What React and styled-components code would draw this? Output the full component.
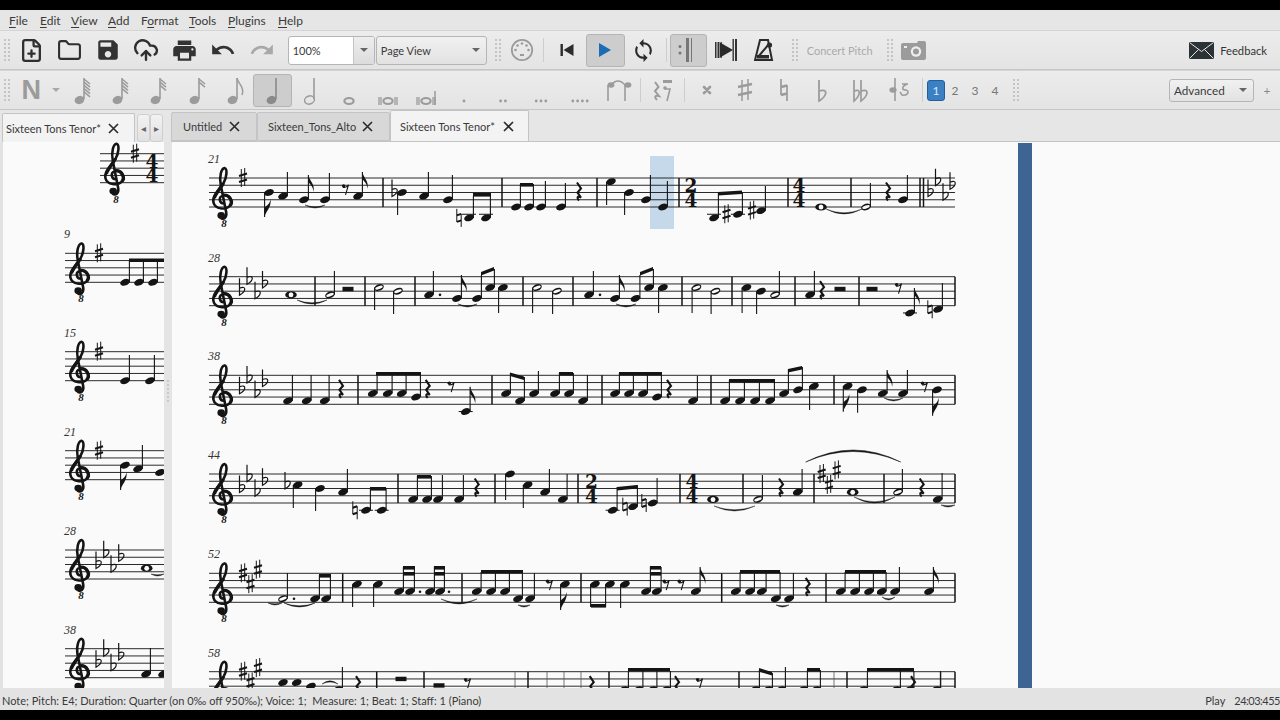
import React from "react";
import styled, { createGlobalStyle } from "styled-components";
import { CloudUpload, FilePlus, Folder } from "lucide-react";

const UI_FONT = `Lato, "Noto Sans", sans-serif`;
const INK = "#141414";
const GREY_ICON = "#9b9b9b";

const GlobalStyle = createGlobalStyle`
  html, body { margin: 0; padding: 0; background: #000; }
  body { font-family: ${UI_FONT}; overflow: hidden; }
`;

const Window = styled.div`
  width: 1280px;
  height: 720px;
  display: flex;
  flex-direction: column;
  background: #e4e4e4;
  border-top: 10px solid #000;
  border-bottom: 10px solid #000;
  box-sizing: border-box;
`;

const MenuBar = styled.div`
  height: 20px;
  flex: none;
  display: flex;
  align-items: center;
  padding-left: 9px;
  background: #e6e6e6;
`;

const MenuItem = styled.span`
  width: ${props => props.$w}px;
  font-size: 12px;
  color: #3a3a3a;
  u { text-underline-offset: 2px; }
`;

const Toolbar = styled.div`
  height: 40px;
  flex: none;
  box-sizing: border-box;
  display: flex;
  align-items: center;
  padding-left: 3px;
  background: linear-gradient(#ececec, #e4e4e4);
  border-top: 1px solid #d4d4d4;
  border-bottom: 1px solid #c6c6c6;
`;

const Grip = styled.div`
  width: 2px;
  height: 22px;
  flex: none;
  margin: 0 ${props => props.$mr ?? 4}px 0 ${props => props.$ml ?? 4}px;
  border-left: 2px dotted #c4c4c4;
  border-right: 2px dotted #c4c4c4;
`;

const Sep = styled.div`
  width: 1px;
  height: 24px;
  flex: none;
  margin: 0 ${props => props.$m ?? 3}px;
  background: #cdcdcd;
`;

const ToolButton = styled.div`
  width: ${props => props.$w || 38.4}px;
  height: 33px;
  flex: none;
  box-sizing: border-box;
  display: flex;
  align-items: center;
  justify-content: center;
  margin-left: ${props => props.$ml || 0}px;
  padding-right: ${props => props.$pr || 0}px;
  border-radius: 3px;
  border: 1px solid ${props => (props.$on ? "#b4b4b4" : "transparent")};
  background: ${props => (props.$on ? "#cdcdcd" : "transparent")};
`;

const Combo = styled.div`
  width: ${props => props.$w}px;
  height: ${props => props.$h || 29}px;
  flex: none;
  box-sizing: border-box;
  display: flex;
  align-items: center;
  justify-content: space-between;
  padding-left: 4px;
  margin-left: ${props => props.$ml || 0}px;
  font-size: ${props => props.$fs || 11}px;
  color: #3a3a3a;
  border: 1px solid #b5b5b5;
  border-radius: 3px;
  background: linear-gradient(#f1f1f1, #e2e2e2);
  overflow: hidden;
`;

const ZoomCombo = styled(Combo)`
  background: #fff;
  padding-right: 0;
`;

const ComboArrow = styled.div`
  width: ${props => props.$w || 20}px;
  align-self: stretch;
  display: flex;
  align-items: center;
  justify-content: center;
  background: ${props => (props.$panel ? "linear-gradient(#eee, #dcdcdc)" : "transparent")};
  border-left: ${props => (props.$panel ? "1px solid #c4c4c4" : "none")};

  &::after {
    content: "";
    border-left: 4px solid transparent;
    border-right: 4px solid transparent;
    border-top: 4px solid #666;
  }
`;

const Disabled = styled.span`
  font-size: 11px;
  color: #aaa;
  width: ${props => props.$w}px;
  margin-left: ${props => props.$ml || 0}px;
  flex: none;
`;

const Spacer = styled.div`
  flex: 1;
`;

const Feedback = styled.div`
  display: flex;
  align-items: center;
  gap: 6px;
  padding-right: 13px;
  font-size: 11.2px;
  color: #333;
`;

const SmallArrow = styled.div`
  width: 11px;
  flex: none;
  display: flex;
  justify-content: center;

  &::after {
    content: "";
    border-left: 4px solid transparent;
    border-right: 4px solid transparent;
    border-top: 4px solid #a8a8a8;
  }
`;

const BigN = styled.span`
  font-family: "Liberation Sans", sans-serif;
  font-weight: 700;
  font-size: 27px;
  color: ${GREY_ICON};
`;

const VoiceButton = styled.div`
  width: ${props => (props.$on ? 18 : 20)}px;
  height: ${props => (props.$on ? 21 : 22)}px;
  flex: none;
  box-sizing: border-box;
  display: flex;
  align-items: center;
  justify-content: center;
  font-size: 12px;
  border-radius: 3px;
  color: ${props => (props.$on ? "#d7e8f7" : "#777")};
  background: ${props => (props.$on ? "#3a80c2" : "transparent")};
  border: ${props => (props.$on ? "1px solid #205f9c" : "none")};
`;

const PlusLabel = styled.span`
  width: 26px;
  text-align: center;
  font-size: 12px;
  color: #888;
  flex: none;
`;

const TabRow = styled.div`
  height: 32px;
  flex: none;
  box-sizing: border-box;
  display: flex;
  align-items: flex-end;
  background: #e6e6e6;
  padding-left: 2px;
`;

const Tab = styled.div`
  width: ${props => props.$w}px;
  height: ${props => props.$h || 29}px;
  flex: none;
  box-sizing: border-box;
  display: flex;
  align-items: center;
  padding-left: ${props => props.$pl}px;
  font-size: 11px;
  color: #3a3a3a;
  background: ${props => (props.$active ? "#f3f3f3" : "#d8d8d8")};
  border: 1px solid #c4c4c4;
  border-bottom: ${props => (props.$active ? "none" : "1px solid #c4c4c4")};
  border-radius: 2px 2px 0 0;
`;

const TabLabel = styled.span`
  width: ${props => props.$w}px;
  flex: none;
  white-space: nowrap;
`;

const TabClose = styled.svg`
  width: 11px;
  height: 11px;
  flex: none;
`;

const TabScroll = styled.div`
  width: 13px;
  height: 28px;
  flex: none;
  box-sizing: border-box;
  display: flex;
  align-items: center;
  justify-content: center;
  color: #666;
  font-size: 10px;
  background: linear-gradient(#f2f2f2, #e2e2e2);
  border: 1px solid #cfcfcf;
  border-radius: 3px;
  margin-left: ${props => props.$ml || 0}px;
`;

const TabStrip = styled.div`
  flex: 1;
  height: 29px;
  display: flex;
  align-items: flex-end;
  margin-left: 8px;
  border-bottom: 1px solid #c4c4c4;
  box-sizing: border-box;
`;

const Body = styled.div`
  flex: 1;
  min-height: 0;
  display: flex;
  background: #fafafa;
`;

const SidePanel = styled.div`
  width: 164px;
  flex: none;
  box-sizing: border-box;
  border-left: 3px solid #e2e2e2;
  overflow: hidden;
`;

const Splitter = styled.div`
  width: 8px;
  flex: none;
  background: #e4e4e4;
  display: flex;
  align-items: center;
  justify-content: center;
`;

const SplitHandle = styled.div`
  width: 0;
  height: 22px;
  margin-bottom: 48px;
  border-left: 2px dotted #c8c8c8;
`;

const ScorePane = styled.div`
  flex: 1;
  display: flex;
  overflow: hidden;
`;

const ScoreSvg = styled.svg`
  display: block;
  flex: none;
`;

const BlueBar = styled.div`
  width: 14px;
  flex: none;
  margin-top: 1px;
  background: #3d6493;
`;

const StatusBar = styled.div`
  height: 22px;
  flex: none;
  box-sizing: border-box;
  display: flex;
  align-items: center;
  justify-content: space-between;
  padding: 3px 0 0 2px;
  font-size: 11px;
  color: #3a3a3a;
  background: #e3e3e3;
  white-space: pre;
`;

const StatusRight = styled.div`
  display: flex;
  gap: 9px;
`;

const Clock = styled.span`
  letter-spacing: -0.5px;
`;

const MeasureNumber = styled.text`
  font-family: "Liberation Serif", serif;
  font-style: italic;
  font-size: 12px;
  fill: #333;
`;

const ClefEight = styled.text`
  font-family: "Liberation Serif", serif;
  font-style: italic;
  font-weight: 700;
  font-size: 11px;
  fill: ${INK};
  text-anchor: middle;
`;

const TimeDigit = styled.text`
  font-family: "DejaVu Serif", serif;
  font-weight: 700;
  font-size: 18.5px;
  fill: ${INK};
  text-anchor: middle;
`;

// ---- score drawing ----

const SP = 3.625;
const yAt = (bottom, p) => bottom - p * SP;

const Clef = ({ x, bottom, eight }) => (
  <g transform={`translate(${x} ${bottom})`}>
    <g transform="scale(1.12 1)">
      <path
        d="M1.5 -3.5 C-3.5 -3 -4.5 -10 0 -11.5 C6 -13 9.5 -5 6 -1 C2.5 3 -7 2.5 -8.5 -4.5 C-10 -11 -3 -18 0.5 -24 C3.5 -30 4 -38 1.5 -39 C-1.5 -38.5 -3.5 -31 -2 -22 L2.8 5 C3.8 11 0 13.5 -2 11"
        fill="none"
        stroke={INK}
        strokeWidth="2.3"
      />
      <path d="M0 -12 C6 -13 9.5 -5 6 -1" fill="none" stroke={INK} strokeWidth="3" />
      <path d="M-7.8 -9 C-6 -14 -2 -19 0.5 -24" fill="none" stroke={INK} strokeWidth="3" />
      <circle cx="-1.6" cy="8.4" r="3.4" fill={INK} />
    </g>
    {eight && <ClefEight x="1" y="20">8</ClefEight>}
  </g>
);

const Flat = ({ x, y }) => (
  <path
    d={`M${x - 2} ${y - 13} L${x - 2} ${y + 4} C${x + 5} ${y + 0} ${x + 5} ${y - 6} ${x - 2} ${y - 3}`}
    fill="none"
    stroke={INK}
    strokeWidth="1.2"
  />
);

const Sharp = ({ x, y }) => (
  <g stroke={INK}>
    <path d={`M${x - 1.7} ${y - 9} V${y + 9} M${x + 1.7} ${y - 10} V${y + 8}`} strokeWidth="1" />
    <path d={`M${x - 4} ${y - 2} L${x + 4} ${y - 4.5} M${x - 4} ${y + 4} L${x + 4} ${y + 1.5}`} strokeWidth="2" />
  </g>
);

const Natural = ({ x, y }) => (
  <g stroke={INK}>
    <path d={`M${x - 2.2} ${y - 9} V${y + 4} M${x + 2.2} ${y - 4} V${y + 9}`} strokeWidth="1" />
    <path d={`M${x - 2.2} ${y - 2.5} L${x + 2.2} ${y - 4} M${x - 2.2} ${y + 4} L${x + 2.2} ${y + 2.5}`} strokeWidth="2" />
  </g>
);

const Head = ({ x, y, open, whole }) => {
  if (whole) {
    return (
      <g>
        <ellipse cx={x} cy={y} rx="5.8" ry="3.6" fill={INK} />
        <ellipse cx={x} cy={y} rx="2.4" ry="2.5" fill="#fafafa" />
      </g>
    );
  }
  return (
    <g transform={`rotate(-20 ${x} ${y})`}>
      <ellipse cx={x} cy={y} rx="5" ry="3.2" fill={INK} />
      {open && <ellipse cx={x} cy={y} rx="3.9" ry="1.5" fill="#fafafa" />}
    </g>
  );
};

// one note: [x, pitch, stem end y, options]
const Note = ({ bottom, n }) => {
  const [x, p, end, o = {}] = n;
  const y = yAt(bottom, p);
  const up = end < y;
  const sx = up ? x + 4.4 : x - 4.4;
  return (
    <g>
      {p <= -2 && <line x1={x - 7} x2={x + 7} y1={yAt(bottom, -2)} y2={yAt(bottom, -2)} stroke={INK} />}
      {end != null && <line x1={sx} x2={sx} y1={y} y2={end} stroke={INK} strokeWidth="1.1" />}
      {o.flag && up && (
        <path
          d={`M${sx} ${end} C${sx + 1} ${end + 6} ${sx + 7} ${end + 9} ${sx + 5} ${end + 17} C${sx + 5} ${end + 11} ${sx + 1} ${end + 9} ${sx} ${end + 7} Z`}
          fill={INK}
        />
      )}
      {o.flag && !up && (
        <path
          d={`M${sx} ${end} C${sx + 1} ${end - 6} ${sx + 7} ${end - 9} ${sx + 6} ${end - 18} C${sx + 5} ${end - 12} ${sx + 1} ${end - 11} ${sx} ${end - 9} Z`}
          fill={INK}
        />
      )}
      <Head x={x} y={y} open={o.open} whole={o.whole} />
      {o.dot && <circle cx={x + 11} cy={y} r="1.3" fill={INK} />}
    </g>
  );
};

const Beam = ({ b }) => {
  const [x1, y1, x2, y2] = b;
  return <polygon points={`${x1},${y1} ${x2},${y2} ${x2},${y2 + 3.6} ${x1},${y1 + 3.6}`} fill={INK} />;
};

const Tie = ({ t }) => {
  const [x1, x2, y, d = 5] = t;
  const mid = (x1 + x2) / 2;
  return (
    <path
      d={`M${x1} ${y} Q${mid} ${y + d * 2} ${x2} ${y} Q${mid} ${y + d * 2 - 2.4} ${x1} ${y} Z`}
      fill={INK}
      stroke={INK}
      strokeWidth="0.4"
    />
  );
};

const QuarterRest = ({ x, y }) => (
  <path
    d={`M${x - 2} ${y - 10} L${x + 2} ${y - 4} L${x - 1.5} ${y} L${x + 2} ${y + 5} C${x - 1.5} ${y + 3} ${x - 2.5} ${y + 5} ${x} ${y + 8}`}
    fill="none"
    stroke={INK}
    strokeWidth="2.1"
  />
);

const EighthRest = ({ x, y }) => (
  <g>
    <circle cx={x - 2.4} cy={y - 3} r="1.7" fill={INK} />
    <path d={`M${x - 3} ${y - 1.5} C${x - 1} ${y - 1} ${x + 1} ${y - 1.5} ${x + 2.5} ${y - 4} L${x - 0.5} ${y + 6}`} fill="none" stroke={INK} strokeWidth="1.1" />
  </g>
);

const System = ({ s }) => {
  const { bottom, x1, x2 = 955, clefAt = 14, noEight } = s;
  return (
    <g>
      {[0, 1, 2, 3, 4].map(i => (
        <line key={i} x1={x1} x2={x2} y1={yAt(bottom, i * 2)} y2={yAt(bottom, i * 2)} stroke="#2a2a2a" strokeWidth="1" />
      ))}
      {s.label && (
        <MeasureNumber x={x1 - 1} y={bottom - 44}>
          {s.label}
        </MeasureNumber>
      )}
      <Clef x={x1 + clefAt} bottom={bottom} eight={!noEight} />
      {(s.flats || []).map(([x, p]) => <Flat key={x} x={x} y={yAt(bottom, p)} />)}
      {(s.sharps || []).map(([x, p]) => <Sharp key={x} x={x} y={yAt(bottom, p)} />)}
      {(s.naturals || []).map(([x, p]) => <Natural key={x} x={x} y={yAt(bottom, p)} />)}
      {(s.time || []).map(([x, a, b]) => (
        <g key={x}>
          <TimeDigit x={x} y={yAt(bottom, 4) - 0.5}>{a}</TimeDigit>
          <TimeDigit x={x} y={bottom - 0.5}>{b}</TimeDigit>
        </g>
      ))}
      {(s.bars || []).map(x => (
        <line key={x} x1={x} x2={x} y1={yAt(bottom, 8)} y2={bottom} stroke={INK} strokeWidth="1.5" />
      ))}
      {(s.thin || []).map(x => (
        <line key={x} x1={x} x2={x} y1={yAt(bottom, 8)} y2={bottom} stroke="#555" strokeWidth="0.8" />
      ))}
      {(s.notes || []).map(n => <Note key={n[0]} bottom={bottom} n={n} />)}
      {(s.beams || []).map((b, i) => <Beam key={i} b={b} />)}
      {(s.ties || []).map((t, i) => <Tie key={i} t={t} />)}
      {(s.quarter || []).map(x => <QuarterRest key={x} x={x} y={yAt(bottom, 4)} />)}
      {(s.eighth || []).map(x => <EighthRest key={x} x={x} y={yAt(bottom, 5)} />)}
      {(s.half || []).map(([x, p = 4]) => (
        <rect key={x} x={x - 5.5} y={yAt(bottom, p) - 4.4} width="11" height="4.4" fill={INK} />
      ))}
      {s.extra || null}
    </g>
  );
};

const FLATS = [[241.5, 4], [249, 7], [257, 3], [264.5, 6]];
const SHARPS = [[243, 8], [250.5, 5], [258, 9]];
const SIDE_FLATS = [[98, 4], [105.7, 7], [113, 3], [120.7, 6]];
const f = { flag: true };
const o = { open: true };
const w = { whole: true };

const SYSTEMS = [
  {
    bottom: 207, x1: 209, label: "21",
    sharps: [[243, 8], [726.5, -2], [752, -1]],
    naturals: [[459, -3]],
    flats: [[394, 4], [930, 4], [937.5, 7], [945, 3], [952, 6]],
    time: [[691, 2, 4], [799, 4, 4]],
    bars: [383, 502, 597, 679, 788, 851, 920, 923.5],
    notes: [
      [269, 4, 217, f], [283, 3, 172], [304, 2, 175, f], [325, 2, 173], [358, 3, 172, f],
      [402, 4, 215], [424, 3, 172], [448, 2, 175], [469, -3, 196], [486, -3, 196],
      [516, 0, 184], [529, 0, 184], [541, 0, 181], [561, 0, 183],
      [611, 7, 205], [629, 4, 215], [646, 2, 175], [663, 0, 181],
      [714, -3, 193], [738, -2, 192], [761, -1, 186],
      [821, 0, null, w], [866, 0, 183, o], [903, 2, 175],
    ],
    beams: [[473, 193, 491, 193], [520, 183, 533, 183], [718, 192, 742, 190.5]],
    ties: [[305, 325, 205, 3], [826, 862, 209, 5]],
    quarter: [579, 888],
    eighth: [346],
  },
  {
    bottom: 305.7, x1: 209, label: "28",
    flats: FLATS,
    naturals: [[930, -1]],
    bars: [315, 365, 415, 523, 573, 682, 732, 795, 859, 955],
    notes: [
      [291, 3, null, w], [330, 3, 271, o], [379, 5, 310, o], [398, 4, 314, o],
      [429, 3, 271, { dot: true }], [457, 2, 275, f], [477, 2, 275], [490, 5, 269], [503, 5, 313],
      [537, 5, 313, o], [557, 4, 314, o],
      [589, 3, 271, { dot: true }], [615, 2, 275, f], [635.5, 2, 275], [649, 5, 269], [663, 5, 313],
      [696.5, 5, 313, o], [715.5, 4, 314, o], [746.5, 5, 313], [761, 4, 314], [775, 3, 271, o],
      [810, 3, 271], [910, -2, 288, f], [938, -1, 283],
    ],
    beams: [[481, 272, 494, 267], [640, 272, 653, 267]],
    ties: [[297, 327, 300, 4], [458, 477, 304, 3], [616, 636, 304, 3]],
    quarter: [822],
    eighth: [899],
    half: [[348], [840], [872]],
  },
  {
    bottom: 404.3, x1: 209, label: "38",
    flats: FLATS,
    bars: [358, 492, 602, 711, 834, 955],
    notes: [
      [288, 1, 375], [306.7, 1, 375], [324.7, 1, 375],
      [372.7, 3, 373], [387.7, 3, 373], [401.7, 3, 373], [416, 2, 373], [465.7, -2, 386.7, f],
      [506, 3, 373], [520, 1, 377], [534, 3, 371], [555, 3, 373], [569, 3, 373], [583, 1, 375],
      [615, 3, 373], [629, 3, 373], [643, 3, 373], [657, 2, 373], [693, 1, 375.7],
      [725, 1, 380], [740, 1, 380], [755, 1, 380], [770, 1, 380], [784, 3, 369], [798, 4, 367],
      [814, 5, 410], [847.7, 5, 411.7, f], [862, 4, 412.7], [882.7, 3, 370, f], [903, 3, 370], [937, 4, 415.7, f],
    ],
    beams: [
      [376, 372, 421, 372], [510, 372.5, 524, 376.5], [559, 372, 573, 372], [619, 372, 662, 372],
      [729, 379, 775, 379], [788, 369, 802, 366],
    ],
    ties: [[884, 903, 398, 3]],
    quarter: [341, 427.7, 669],
    eighth: [451.7, 925],
  },
  {
    bottom: 503, x1: 209, label: "44",
    flats: [...FLATS, [287, 5]],
    naturals: [[355, -2], [625, -1], [644, 0]],
    sharps: [[821.7, 8], [829, 5], [836.7, 9]],
    time: [[591.5, 2, 4], [692, 4, 4]],
    bars: [398, 495, 578, 680, 743, 814, 884, 955],
    notes: [
      [297.7, 5, 508], [320, 4, 511], [343, 3, 469], [366, -2, 488], [381.7, -2, 488],
      [413, 1, 476], [427, 1, 476], [438, 1, 475], [459, 1, 475],
      [510, 8, 500], [527.7, 5, 508], [545, 3, 469], [562.7, 1, 474],
      [612.7, -2, 487], [633, -1, 485], [652.7, 0, 478],
      [713, 1, null, w], [758, 1, 475, o], [797.7, 3, 469],
      [852.7, 3, null, w], [898, 3, 469, o], [937.7, 1, 473],
    ],
    beams: [[370, 487, 386, 487], [417, 475, 431, 475], [617, 487, 637, 485]],
    ties: [[714, 755, 506, 5], [854, 895, 497, 6], [941, 955, 505, 2]],
    quarter: [476.7, 781, 921.7],
    extra: <path d="M805.7 462 Q853 438 900.7 462 Q853 441 805.7 462 Z" fill={INK} stroke={INK} strokeWidth="0.5" />,
  },
  {
    bottom: 602.3, x1: 209, label: "52",
    sharps: SHARPS,
    bars: [342.7, 462, 581, 721.7, 826, 955],
    notes: [
      [283, 1, 573, { open: true, dot: true }], [315, 1, 575], [326, 1, 575],
      [357, 5, 607], [378, 5, 607], [399, 3, 567], [410, 3, 567], [430, 3, 567], [440, 3, 567],
      [476.7, 3, 572], [491, 3, 572], [505, 3, 572], [518, 1, 572], [530, 1, 573], [565, 5, 610, f],
      [595, 5, 607], [610, 5, 607], [625, 5, 608], [646, 3, 567], [656.7, 3, 567], [695.7, 3, 567, f],
      [735.7, 3, 572], [750, 3, 572], [761.7, 3, 572], [775.7, 1, 572], [789, 1, 573],
      [840.7, 3, 572], [855, 3, 572], [869, 3, 572], [881.7, 3, 572], [895, 3, 567], [929, 3, 567, f],
    ],
    beams: [
      [319, 574, 331, 574],
      [403, 566, 415, 566], [403, 572, 415, 572], [434, 566, 445, 566], [434, 572, 445, 572],
      [481, 570, 523, 570], [591, 604, 606, 604],
      [650, 566, 661, 566], [650, 572, 661, 572],
      [740, 570, 780, 570], [845, 570, 886, 570],
    ],
    ties: [[268, 282, 603, 2], [284, 315, 603, 4], [441, 477, 599, 5], [518, 530, 605, 2], [776, 789, 605, 2], [882, 895, 597, 3]],
    quarter: [807.7],
    eighth: [550, 666.7, 681.7],
    extra: (
      <g>
        <circle cx="420" cy="591.7" r="1.3" fill={INK} />
        <circle cx="449" cy="591.7" r="1.3" fill={INK} />
      </g>
    ),
  },
  {
    bottom: 700.7, x1: 209, label: "58", noEight: true,
    sharps: SHARPS,
    bars: [376.7, 424, 528, 609, 739, 847, 955],
    thin: [515, 547, 564, 581, 834, 941],
    notes: [
      [283, 5, null], [296.7, 5, null], [311, 4, null], [338, 3, 667],
      [624, 3, 671], [638.5, 3, 671], [652.5, 3, 671], [666, 3, 671],
      [755, 3, 670], [768, 3, 673], [781, 3, 667], [803, 3, 670], [816, 3, 670],
      [863, 3, 671], [896, 3, 671], [909.5, 3, 671], [936, 3, 671],
    ],
    beams: [[628, 668, 670, 668], [759, 668, 772, 672], [807, 668, 820, 668], [867, 668, 914, 668]],
    ties: [[322, 338, 684, -2]],
    quarter: [358, 591.7, 677, 913],
    eighth: [468, 700],
    half: [[401, 5.4], [439, 3.6]],
  },
];

const SIDE_SYSTEMS = [
  {
    bottom: 182.7, x1: 100, x2: 164, clefAt: 15,
    sharps: [[135, 8]],
    time: [[152, 4, 4]],
  },
  {
    bottom: 282.3, x1: 65, x2: 164, clefAt: 15, label: "9",
    sharps: [[99, 8]],
    notes: [[125, 0, 260], [139, 0, 260], [153, 0, 260]],
    beams: [[129, 258.5, 164, 258.5]],
  },
  {
    bottom: 380.7, x1: 65, x2: 164, clefAt: 15, label: "15",
    sharps: [[99, 8]],
    notes: [[125, 0, 355], [150, 0, 355]],
  },
  {
    bottom: 479.7, x1: 65, x2: 164, clefAt: 15, label: "21",
    sharps: [[99, 8]],
    notes: [[125, 4, 490, f], [138, 3, 445], [160, 2, null]],
  },
  {
    bottom: 579, x1: 65, x2: 164, clefAt: 15, label: "28",
    flats: SIDE_FLATS,
    notes: [[146.7, 3, null, w]],
    ties: [[151, 164, 574, 2]],
  },
  {
    bottom: 677.7, x1: 65, x2: 164, clefAt: 15, label: "38", noEight: true,
    flats: SIDE_FLATS,
    notes: [[146, 1, 648], [163, 1, null]],
  },
];

// ---- toolbar icons ----

const GreySvg = styled.svg`
  display: block;
  overflow: visible;
`;

const MatIcon = ({ d, color = "#333", size = 24 }) => (
  <svg width={size} height={size} viewBox="0 0 24 24" fill={color}>
    <path d={d} />
  </svg>
);

const ICON = {
  save: "M17 3H5c-1.11 0-2 .9-2 2v14c0 1.1.89 2 2 2h14c1.1 0 2-.9 2-2V7l-4-4zm-5 16c-1.66 0-3-1.34-3-3s1.34-3 3-3 3 1.34 3 3-1.34 3-3 3zm3-10H5V5h10v4z",
  print: "M19 8H5c-1.66 0-3 1.34-3 3v6h4v4h12v-4h4v-6c0-1.66-1.34-3-3-3zm-3 11H8v-5h8v5zm3-7c-.55 0-1-.45-1-1s.45-1 1-1 1 .45 1 1-.45 1-1 1zm-1-9H6v4h12V3z",
  undo: "M12.5 8c-2.65 0-5.05.99-6.9 2.6L2 7v9h9l-3.62-3.62c1.39-1.16 3.16-1.88 5.12-1.88 3.54 0 6.55 2.31 7.6 5.5l2.37-.78C21.08 11.03 17.15 8 12.5 8z",
  redo: "M18.4 10.6C16.55 8.99 14.15 8 11.5 8c-4.65 0-8.58 3.03-9.96 7.22L3.9 16c1.05-3.19 4.05-5.5 7.6-5.5 1.95 0 3.73.72 5.12 1.88L13 16h9V7l-3.6 3.6z",
  sync: "M12 4V1L8 5l4 4V6c3.31 0 6 2.69 6 6 0 1.01-.25 1.97-.7 2.8l1.46 1.46C19.54 15.03 20 13.57 20 12c0-4.42-3.58-8-8-8zm0 14c-3.31 0-6-2.69-6-6 0-1.01.25-1.97.7-2.8L5.24 7.74C4.46 8.97 4 10.43 4 12c0 4.42 3.58 8 8 8v3l4-4-4-4v3z",
};

const MidiIcon = () => (
  <GreySvg width="24" height="24" viewBox="0 0 24 24">
    <circle cx="12" cy="12" r="10.2" fill="none" stroke={GREY_ICON} strokeWidth="1.8" />
    {[[5.5, 12], [7.5, 7.5], [12, 5.5], [16.5, 7.5], [18.5, 12]].map(([x, y]) => (
      <circle key={x} cx={x} cy={y} r="1.3" fill={GREY_ICON} />
    ))}
    <rect x="10" y="16" width="4" height="2" fill={GREY_ICON} />
  </GreySvg>
);

const RewindIcon = () => (
  <svg width="16" height="16" viewBox="0 0 16 16">
    <rect x="1.5" y="2" width="2.4" height="12" fill="#2c2c2c" />
    <polygon points="14.5,2 14.5,14 4.5,8" fill="#2c2c2c" />
  </svg>
);

const PlayIcon = () => (
  <svg width="14" height="16" viewBox="0 0 14 16">
    <polygon points="1,1 13,8 1,15" fill="#1c6cb5" />
  </svg>
);

const RepeatIcon = () => (
  <svg width="16" height="28" viewBox="0 0 16 28">
    <circle cx="3" cy="10.5" r="1.5" fill="#777" />
    <circle cx="3" cy="17" r="1.5" fill="#777" />
    <rect x="9" y="2" width="3" height="24" fill="#777" />
    <rect x="14" y="2" width="1" height="24" fill="#777" />
  </svg>
);

const PanIcon = () => (
  <svg width="22" height="24" viewBox="0 0 22 24">
    <rect x="0" y="4" width="1.5" height="16" fill="#333" />
    <rect x="2.5" y="4" width="2" height="16" fill="#333" />
    <rect x="5.5" y="4" width="1.5" height="16" fill="#555" />
    <polygon points="5,4.5 18,12 5,19.5" fill="#2b2b2b" />
    <rect x="17.5" y="1" width="1.4" height="22" fill="#333" />
    <rect x="20" y="1" width="2" height="22" fill="#333" />
  </svg>
);

const MetronomeIcon = () => (
  <svg width="20" height="24" viewBox="0 0 20 24">
    <path d="M6 2 H14 L18 22 H1 Z" fill="none" stroke="#2b2b2b" strokeWidth="2" />
    <path d="M4 19 L15 6" stroke="#2b2b2b" strokeWidth="2" />
    <circle cx="15.5" cy="7" r="2.6" fill="#2b2b2b" />
    <rect x="3" y="17" width="12" height="3.5" fill="#2b2b2b" />
  </svg>
);

const CameraIcon = () => (
  <svg width="25" height="19" viewBox="0 0 25 19">
    <path d="M2 2 H16 L17 0 H23 Q25 0 25 2 V17 Q25 19 23 19 H2 Q0 19 0 17 V4 Q0 2 2 2 Z" fill={GREY_ICON} />
    <circle cx="15" cy="10.5" r="5.2" fill="#eee" />
    <circle cx="15" cy="10.5" r="3" fill={GREY_ICON} />
    <rect x="3" y="5" width="3" height="2" fill="#eee" />
  </svg>
);

const MailIcon = () => (
  <svg width="25" height="17" viewBox="0 0 25 17">
    <rect width="25" height="17" fill="#2b3336" />
    <path d="M0.5 0.5 L12.5 9.5 L24.5 0.5 M0.5 16.5 L9.5 7.5 M24.5 16.5 L15.5 7.5" fill="none" stroke="#e8e8e8" strokeWidth="1" />
  </svg>
);

const CloseX = () => (
  <TabClose viewBox="0 0 11 11">
    <path d="M1 1 L10 10 M10 1 L1 10" stroke="#2a2a2a" strokeWidth="1.6" />
  </TabClose>
);

const NoteGlyph = ({ flags = 0, open, color = GREY_ICON }) => (
  <GreySvg width="26" height="34" viewBox="0 0 26 34">
    <line x1="16" x2="16" y1="5" y2="26" stroke={color} strokeWidth="1.6" />
    {flags === 1 && <path d="M16 5 C17 11 24 14 21 22" fill="none" stroke={color} strokeWidth="1.5" />}
    {flags > 1 &&
      Array.from({ length: flags }).map((_, i) => (
        <line key={i} x1="16" x2="22" y1={6 + i * 3.2} y2={11 + i * 3.2} stroke={color} strokeWidth="1.5" />
      ))}
    <ellipse cx="11.5" cy="27" rx="5" ry="4" fill={open ? "none" : color} stroke={color} strokeWidth={open ? 1.5 : 0} transform="rotate(-20 11.5 27)" />
  </GreySvg>
);

const WholeGlyph = ({ bars = 0, tail }) => (
  <GreySvg width="26" height="34" viewBox="0 0 26 34">
    <ellipse cx="13" cy="28" rx="4.6" ry="3" fill="none" stroke={GREY_ICON} strokeWidth="2.2" />
    {bars > 0 && <path d="M6 24 V32 M20 24 V32 M4 24 V32 M22 24 V32" stroke={GREY_ICON} strokeWidth="1.3" />}
    {tail && <path d="M22 18 V32" stroke={GREY_ICON} strokeWidth="1.5" />}
  </GreySvg>
);

const DotsGlyph = ({ n }) => (
  <GreySvg width="26" height="34" viewBox="0 0 26 34">
    {Array.from({ length: n }).map((_, i) => (
      <circle key={i} cx={13 - (n - 1) * 2.4 + i * 4.8} cy="28" r="1.4" fill={GREY_ICON} />
    ))}
  </GreySvg>
);

const TieGlyph = () => (
  <GreySvg width="30" height="30" viewBox="0 0 30 30">
    <path d="M8 10 Q15 2 22 10" fill="none" stroke={GREY_ICON} strokeWidth="1.6" />
    <path d="M5 10 V26 M22 10 V26" stroke={GREY_ICON} strokeWidth="1.6" />
    <ellipse cx="8" cy="10" rx="3.4" ry="2.7" fill={GREY_ICON} />
    <ellipse cx="25" cy="10" rx="3.4" ry="2.7" fill={GREY_ICON} />
  </GreySvg>
);

const RestsGlyph = () => (
  <GreySvg width="24" height="26" viewBox="0 0 24 26">
    <path d="M5 5 L8.5 10 L5 14 L9 19 C5 18 4 20 7 23" fill="none" stroke={GREY_ICON} strokeWidth="2" />
    <rect x="13" y="3" width="9" height="3" fill={GREY_ICON} />
    <circle cx="15" cy="11" r="1.8" fill={GREY_ICON} />
    <path d="M15 12 H20 L17 24" fill="none" stroke={GREY_ICON} strokeWidth="1.6" />
  </GreySvg>
);

const AccGlyph = ({ kind }) => (
  <GreySvg width="22" height="26" viewBox="0 0 22 26">
    {kind === "x" && <path d="M8 10 L14 16 M14 10 L8 16" stroke={GREY_ICON} strokeWidth="2.6" strokeLinecap="round" />}
    {kind === "#" && (
      <g stroke={GREY_ICON}>
        <path d="M8 3 V24 M14 2 V23" strokeWidth="1.5" />
        <path d="M4 10 L18 7 M4 18 L18 15" strokeWidth="2.6" />
      </g>
    )}
    {kind === "n" && (
      <g stroke={GREY_ICON}>
        <path d="M8 2 V18 M14 8 V24" strokeWidth="1.7" />
        <path d="M8 10 L14 8.5 M8 18 L14 16.5" strokeWidth="2.6" />
      </g>
    )}
    {kind === "b" && <path d="M8 3 V24 C16 19 18 11 8 14" fill="none" stroke={GREY_ICON} strokeWidth="1.8" />}
    {kind === "bb" && <path d="M5 3 V24 C11 19 13 11 5 14 M12 3 V24 C19 19 21 11 12 14" fill="none" stroke={GREY_ICON} strokeWidth="1.7" />}
  </GreySvg>
);

const GraceGlyph = () => (
  <GreySvg width="24" height="26" viewBox="0 0 24 26">
    <path d="M8 1 V24" stroke={GREY_ICON} strokeWidth="1.6" />
    <ellipse cx="6" cy="13" rx="3.6" ry="2.8" fill={GREY_ICON} />
    <path d="M15 7 H21 M20 7 C14 10 15 13 19 13 C23 14 21 19 15 18 L13 15" fill="none" stroke={GREY_ICON} strokeWidth="1.5" />
  </GreySvg>
);

const MENU = [
  ["F", "ile", 31], ["E", "dit", 31], ["V", "iew", 37], ["A", "dd", 33],
  ["F", "ormat", 48, true], ["T", "ools", 39], ["P", "lugins", 50], ["H", "elp", 30],
];

const Page = ({ children, box, w: width }) => (
  <ScoreSvg width={width} height={546} viewBox={box}>
    {children}
  </ScoreSvg>
);

const App = () => (
  <Window>
    <GlobalStyle />
    <MenuBar>
      {MENU.map(([a, rest, width, second]) => (
        <MenuItem key={rest} $w={width}>
          {second ? (
            <>
              F<u>o</u>rmat
            </>
          ) : (
            <>
              <u>{a}</u>
              {rest}
            </>
          )}
        </MenuItem>
      ))}
    </MenuBar>

    <Toolbar>
      <Grip $ml={1} $mr={1} />
      <ToolButton $ml={1}>
        <FilePlus size={25} color="#2f2f2f" strokeWidth={2.2} />
      </ToolButton>
      <ToolButton><Folder size={25} color="#2f2f2f" strokeWidth={2} /></ToolButton>
      <ToolButton><MatIcon d={ICON.save} size={26} /></ToolButton>
      <ToolButton><CloudUpload size={26} color="#2f2f2f" strokeWidth={2.2} /></ToolButton>
      <ToolButton><MatIcon d={ICON.print} size={27} /></ToolButton>
      <ToolButton><MatIcon d={ICON.undo} size={26} /></ToolButton>
      <ToolButton><MatIcon d={ICON.redo} color="#a8a8a8" size={26} /></ToolButton>
      <ZoomCombo $w={87} $ml={7}>
        100%
        <ComboArrow $panel />
      </ZoomCombo>
      <Combo $w={111} $ml={1}>
        Page View
        <ComboArrow />
      </Combo>
      <Grip $ml={8} $mr={3} />
      <ToolButton $w={36}><MidiIcon /></ToolButton>
      <Sep $m={3.5} />
      <ToolButton><RewindIcon /></ToolButton>
      <ToolButton $on><PlayIcon /></ToolButton>
      <ToolButton><MatIcon d={ICON.sync} color="#2b2b2b" size={25} /></ToolButton>
      <Sep $m={3} />
      <ToolButton $on $w={37} $pr={7}><RepeatIcon /></ToolButton>
      <ToolButton><PanIcon /></ToolButton>
      <ToolButton><MetronomeIcon /></ToolButton>
      <Grip $ml={8} $mr={8} />
      <Disabled $w={80} $ml={1}>Concert Pitch</Disabled>
      <Grip $ml={0} $mr={2} />
      <ToolButton><CameraIcon /></ToolButton>
      <Spacer />
      <Feedback>
        <MailIcon />
        Feedback
      </Feedback>
    </Toolbar>

    <Toolbar>
      <Grip $ml={1} $mr={1} />
      <ToolButton $ml={1}><BigN>N</BigN></ToolButton>
      <SmallArrow />
      <ToolButton><NoteGlyph flags={5} /></ToolButton>
      <ToolButton><NoteGlyph flags={4} /></ToolButton>
      <ToolButton><NoteGlyph flags={3} /></ToolButton>
      <ToolButton><NoteGlyph flags={2} /></ToolButton>
      <ToolButton><NoteGlyph flags={1} /></ToolButton>
      <ToolButton $on><NoteGlyph color="#8a8a8a" /></ToolButton>
      <ToolButton><NoteGlyph open /></ToolButton>
      <ToolButton><WholeGlyph /></ToolButton>
      <ToolButton><WholeGlyph bars={1} /></ToolButton>
      <ToolButton><WholeGlyph bars={1} tail /></ToolButton>
      <ToolButton><DotsGlyph n={1} /></ToolButton>
      <ToolButton><DotsGlyph n={2} /></ToolButton>
      <ToolButton><DotsGlyph n={3} /></ToolButton>
      <ToolButton><DotsGlyph n={4} /></ToolButton>
      <ToolButton><TieGlyph /></ToolButton>
      <Sep $m={2.5} />
      <ToolButton><RestsGlyph /></ToolButton>
      <Sep $m={2.5} />
      <ToolButton><AccGlyph kind="x" /></ToolButton>
      <ToolButton><AccGlyph kind="#" /></ToolButton>
      <ToolButton><AccGlyph kind="n" /></ToolButton>
      <ToolButton><AccGlyph kind="b" /></ToolButton>
      <ToolButton><AccGlyph kind="bb" /></ToolButton>
      <ToolButton><GraceGlyph /></ToolButton>
      <Sep $m={4} />
      <VoiceButton $on>1</VoiceButton>
      <VoiceButton>2</VoiceButton>
      <VoiceButton>3</VoiceButton>
      <VoiceButton>4</VoiceButton>
      <Grip $ml={8} $mr={8} />
      <Spacer />
      <Combo $w={85} $h={23} $fs={11.7}>
        Advanced
        <ComboArrow />
      </Combo>
      <PlusLabel>+</PlusLabel>
    </Toolbar>

    <TabRow>
      <Tab $w={133} $pl={3} $active>
        <TabLabel $w={102}>Sixteen Tons Tenor*</TabLabel>
        <CloseX />
      </Tab>
      <TabScroll $ml={2}>◂</TabScroll>
      <TabScroll>▸</TabScroll>
      <TabStrip>
        <Tab $w={86} $pl={11}>
          <TabLabel $w={46}>Untitled</TabLabel>
          <CloseX />
        </Tab>
        <Tab $w={133} $pl={10}>
          <TabLabel $w={94}>Sixteen_Tons_Alto</TabLabel>
          <CloseX />
        </Tab>
        <Tab $w={139} $pl={9} $h={31} $active>
          <TabLabel $w={103}>Sixteen Tons Tenor*</TabLabel>
          <CloseX />
        </Tab>
      </TabStrip>
    </TabRow>

    <Body>
      <SidePanel>
        <Page box="3 142 161 546" w={161}>
          {SIDE_SYSTEMS.map(s => <System key={s.bottom} s={s} />)}
        </Page>
      </SidePanel>
      <Splitter>
        <SplitHandle />
      </Splitter>
      <ScorePane>
        <Page box="172 142 846 546" w={846}>
          <rect x="650" y="156" width="24" height="73" fill="#c5d9eb" />
          {SYSTEMS.map(s => <System key={s.bottom} s={s} />)}
        </Page>
        <BlueBar />
      </ScorePane>
    </Body>

    <StatusBar>
      <span>Note; Pitch: E4; Duration: Quarter (on 0‰ off 950‰); Voice: 1;  Measure: 1; Beat: 1; Staff: 1 (Piano)</span>
      <StatusRight>
        <span>Play</span>
        <Clock>24:03:455</Clock>
      </StatusRight>
    </StatusBar>
  </Window>
);

export default App;
